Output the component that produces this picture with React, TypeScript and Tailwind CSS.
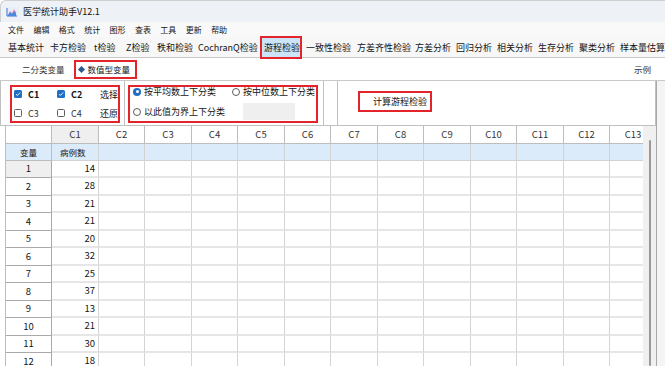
const menus = ["文件", "编辑", "格式", "统计", "图形", "查表", "工具", "更新", "帮助"];

const tabs: { label: string; w: string }[] = [
  { label: "基本统计", w: "w-[42px]" },
  { label: "卡方检验", w: "w-[44px]" },
  { label: "t检验", w: "w-[32px]" },
  { label: "Z检验", w: "w-[31px]" },
  { label: "秩和检验", w: "w-[41px]" },
  { label: "CochranQ检验", w: "w-[66px]" },
  { label: "游程检验", w: "w-[42px]" },
  { label: "一致性检验", w: "w-[51px]" },
  { label: "方差齐性检验", w: "w-[58px]" },
  { label: "方差分析", w: "w-[41px]" },
  { label: "回归分析", w: "w-[41px]" },
  { label: "相关分析", w: "w-[41px]" },
  { label: "生存分析", w: "w-[41px]" },
  { label: "聚类分析", w: "w-[41px]" },
  { label: "样本量估算", w: "w-[50px]" }
];

const columns = ["C1", "C2", "C3", "C4", "C5", "C6", "C7", "C8", "C9", "C10", "C11", "C12", "C13"];
const colWidths = ["w-[47px]", "w-[46px]"];
const rowHeights = ["h-[17px]", "h-[18px]"];
const values = [14, 28, 21, 21, 20, 32, 25, 37, 13, 21, 30, 18];

function CheckBox(props: { checked: boolean; label: string }) {
  return (
    <div className="flex items-center gap-[6px]">
      {props.checked ? (
        <span className="flex h-[8px] w-[8px] items-center justify-center rounded-[1.5px] bg-[#1f6fc5]">
          <svg viewBox="0 0 8 8" className="h-[6px] w-[6px]">
            <path d="M1.3 4.2 L3.2 6 L6.8 2" fill="none" stroke="white" strokeWidth="1.2" />
          </svg>
        </span>
      ) : (
        <span className="h-[8px] w-[8px] rounded-[1.5px] border border-[#5c5c5c] bg-white" />
      )}
      <span className={props.checked ? "font-bold text-[#111]" : "text-[#333]"}>{props.label}</span>
    </div>
  );
}

function Radio(props: { checked: boolean; label: string }) {
  return (
    <div className="flex items-center gap-[3px]">
      <span
        className={
          props.checked
            ? "flex h-[8px] w-[8px] items-center justify-center rounded-full bg-[#1f6fc5]"
            : "h-[8px] w-[8px] rounded-full border border-[#5c5c5c] bg-white"
        }
      >
        {props.checked && <span className="h-[3px] w-[3px] rounded-full bg-white" />}
      </span>
      <span>{props.label}</span>
    </div>
  );
}

export default function App() {
  return (
    <div className="flex h-[366px] w-[665px] flex-col overflow-hidden bg-white font-['Noto_Sans_CJK_SC',sans-serif] text-[9px] leading-none text-[#141414]">
      {/* title bar */}
      <div className="flex h-[22px] shrink-0 items-center gap-[5px] rounded-tl-[6px] border-t border-l border-[#cfcfcf] bg-[#eef2f6] pl-[5px]">
        <svg viewBox="0 0 12 10" className="h-[10px] w-[12px]">
          <rect x="0" y="0" width="12" height="10" fill="#e6eef9" />
          <path d="M1 9 V1 M1 9 H11" stroke="#3a78d0" strokeWidth="1" />
          <path d="M2 8 L4 4 L6 6 L8 2 L10 5 V9 H2 Z" fill="#f08ab0" opacity="0.85" />
          <path d="M2 8 L4 5 L6 7 L8 4 L10 6 V9 H2 Z" fill="#4a8be0" />
        </svg>
        <span className="text-[9px]">医学统计助手V12.1</span>
      </div>

      {/* menu bar */}
      <div className="flex h-[15px] shrink-0 items-center bg-[#f9f9f9] pl-[8px]">
        {menus.map((m) => (
          <span key={m} className="w-[25.4px] text-[8px]">
            {m}
          </span>
        ))}
      </div>

      {/* tab bar */}
      <div className="flex h-[21px] shrink-0 items-center border-b border-[#c9c9c9] bg-[#f7f7f7] pl-[4px]">
        {tabs.map((t) =>
          t.label === "游程检验" ? (
            <div
              key={t.label}
              className={`${t.w} relative z-10 mt-[1px] flex h-[23px] shrink-0 items-center border-2 border-[#e3242b] bg-[#cce4f7] pl-[2px]`}
            >
              {t.label}
            </div>
          ) : (
            <div key={t.label} className={`${t.w} shrink-0 whitespace-nowrap pl-[4px]`}>
              {t.label}
            </div>
          )
        )}
      </div>

      {/* sub tabs */}
      <div className="flex h-[23px] shrink-0 items-center border-b border-[#c9c9c9] pl-[22px] pr-[14px]">
        <span className="text-[8.5px] text-[#333]">二分类变量</span>
        <div className="ml-[9px] flex h-[19px] w-[63px] items-center gap-[4px] border-2 border-[#e3242b] pl-[3px]">
          <span className="h-[5px] w-[5px] rotate-45 bg-[#2a5b8c]" />
          <span className="text-[8.5px]">数值型变量</span>
        </div>
        <span className="ml-auto text-[8.5px] text-[#333]">示例</span>
      </div>

      <div className="flex min-h-0 flex-1">
        <div className="flex w-[656px] shrink-0 flex-col">
          {/* options */}
          <div className="flex h-[45px] shrink-0 items-stretch border-b border-l border-[#c0c0c0] pl-[5px]">
            <div className="flex w-[119px] shrink-0 items-center border-r border-[#c0c0c0] pl-[4px] pt-[1px]">
              <div className="flex h-[38px] w-[110px] flex-col justify-center gap-[10px] border-2 border-[#e3242b] pl-[2px]">
                <div className="flex items-center">
                  <div className="w-[43px]">
                    <CheckBox checked label="C1" />
                  </div>
                  <div className="w-[43px]">
                    <CheckBox checked label="C2" />
                  </div>
                  <span>选择</span>
                </div>
                <div className="flex items-center">
                  <div className="w-[43px]">
                    <CheckBox checked={false} label="C3" />
                  </div>
                  <div className="w-[43px]">
                    <CheckBox checked={false} label="C4" />
                  </div>
                  <span>还原</span>
                </div>
              </div>
            </div>
            <div className="flex w-[199px] shrink-0 items-center border-r border-[#c0c0c0] pl-[3px] pt-[1px]">
              <div className="flex h-[38px] w-[190px] flex-col justify-center gap-[7px] border-2 border-[#e3242b] pl-[3px]">
                <div className="flex items-center">
                  <div className="w-[99px]">
                    <Radio checked label="按平均数上下分类" />
                  </div>
                  <Radio checked={false} label="按中位数上下分类" />
                </div>
                <div className="flex items-center">
                  <div className="w-[110px]">
                    <Radio checked={false} label="以此值为界上下分类" />
                  </div>
                  <div className="h-[17px] w-[52px] bg-[#efefef]" />
                </div>
              </div>
            </div>
            <div className="ml-[13px] flex flex-1 items-center border-l border-r border-[#c0c0c0] pb-[4px] pl-[20px]">
              <div className="flex h-[21px] w-[74px] items-center border-2 border-[#e3242b] bg-white pl-[13px]">
                计算游程检验
              </div>
            </div>
          </div>

          {/* grid */}
          <div className="flex min-h-0 flex-1 pl-[5px]">
            <div className="w-[638px] shrink-0 overflow-hidden border-l border-[#bdbdbd]">
              <div className="flex h-[18px] w-max">
                <div className="w-[46px] shrink-0 border-r border-b border-[#bdbdbd] bg-white" />
                {columns.map((c, i) => (
                  <div
                    key={c}
                    className={`${colWidths[i % 2]} flex shrink-0 items-center justify-center border-r border-b border-[#bdbdbd] text-[9.5px] text-[#333] ${
                      i === 0 ? "bg-[#efefef]" : "bg-white"
                    }`}
                  >
                    {c}
                  </div>
                ))}
              </div>
              <div className="flex h-[17px] w-max bg-[#dcebfa]">
                <div className="flex w-[46px] shrink-0 items-center justify-center border-r border-b border-[#bdbdbd] text-[8.5px]">
                  变量
                </div>
                {columns.map((c, i) => (
                  <div
                    key={c}
                    className={`${colWidths[i % 2]} flex shrink-0 items-center border-r border-b border-[#d2d2d2] pl-[8px] text-[8.5px]`}
                  >
                    {i === 0 ? "病例数" : ""}
                  </div>
                ))}
              </div>
              {values.map((v, r) => (
                <div key={r} className={`${rowHeights[r % 2]} flex w-max`}>
                  <div
                    className={`flex w-[46px] shrink-0 items-center justify-center border-r border-b border-[#a9a9a9] text-[9.5px] ${
                      r === 0 ? "bg-[#efefef]" : "bg-white"
                    }`}
                  >
                    {r + 1}
                  </div>
                  {columns.map((c, i) => (
                    <div
                      key={c}
                      className={`${colWidths[i % 2]} flex shrink-0 items-center justify-end border-r border-b-2 border-r-[#d4d4d4] border-b-[#e6e6e6] pr-[3px] text-[9.5px]`}
                    >
                      {i === 0 ? v : ""}
                    </div>
                  ))}
                </div>
              ))}
            </div>
            <div className="flex w-[13px] shrink-0 justify-center bg-[#f0f0f0] pt-[14px]">
              <div className="h-full w-[2px] rounded-full bg-[#9a9a9a]" />
            </div>
          </div>
        </div>
        <div className="flex-1 border-l border-[#a8a8a8] bg-[#f4f4f4]" />
      </div>
    </div>
  );
}
